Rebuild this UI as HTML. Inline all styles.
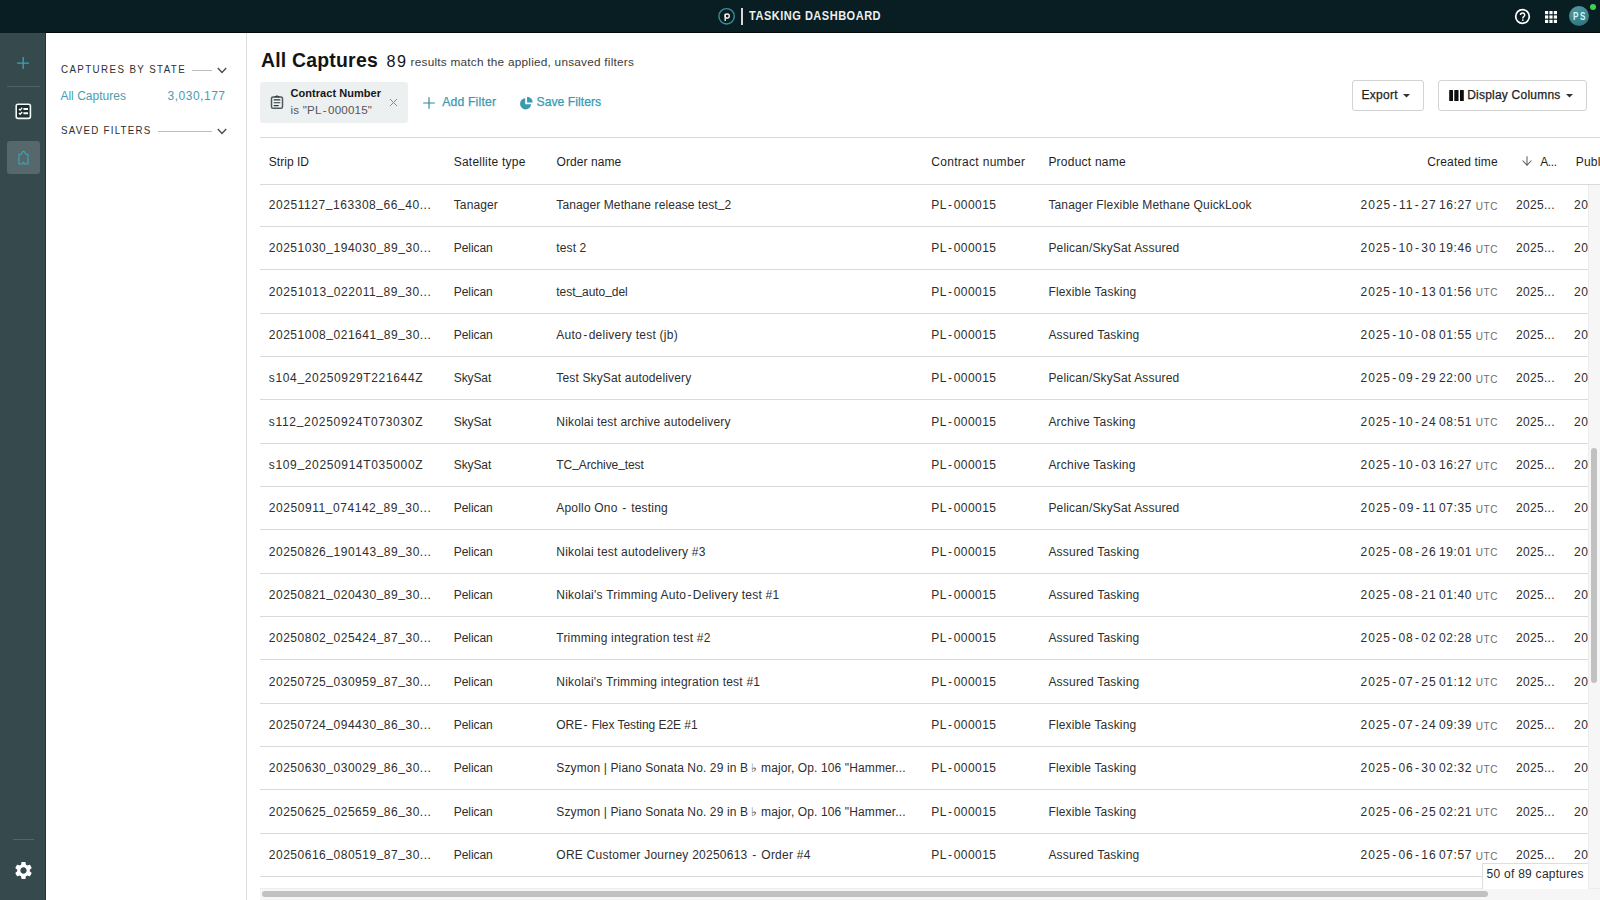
<!DOCTYPE html>
<html><head><meta charset="utf-8"><style>
*{box-sizing:border-box;margin:0;padding:0}
html,body{width:1600px;height:900px;overflow:hidden;background:#fff;font-family:"Liberation Sans",sans-serif;color:#222}
.abs{position:absolute}
.t{position:absolute;white-space:nowrap}
.med{-webkit-text-stroke:0.25px currentColor}
.u{position:relative;top:-1.6px}
.ln{position:absolute;left:260px;height:1px;background:#dadada}
#top{position:absolute;left:0;top:0;width:1600px;height:33px;background:#091e22}
#rail{position:absolute;left:0;top:33px;width:46px;height:867px;background:#364a4e;border-right:1px solid #23363a}
#panel{position:absolute;left:46px;top:33px;width:201px;height:867px;background:#fff;border-right:1px solid #dcdcdc}
</style></head><body>
<div id="top"></div>
<svg class="abs" style="left:717px;top:7px" width="20" height="20" viewBox="0 0 20 20"><circle cx="9.6" cy="9.3" r="7.7" fill="none" stroke="#3a8f9b" stroke-width="1.4"/><path d="M8.2 6.8v7.2" stroke="#f4f4f4" stroke-width="1.35"/><circle cx="10.2" cy="9.1" r="2.1" fill="none" stroke="#f4f4f4" stroke-width="1.35"/></svg>
<div class="abs" style="left:741px;top:8px;width:2px;height:16.5px;background:#d8d8d8"></div>
<svg class="abs" style="left:1514px;top:8px" width="17" height="17" viewBox="0 0 17 17"><circle cx="8.5" cy="8.5" r="6.8" fill="none" stroke="#fff" stroke-width="1.7"/><path d="M6.5 7.1c0-1.2.9-2 2.1-2s2.1.8 2.1 1.9c0 1.5-1.9 1.6-1.9 3.2v.4" fill="none" stroke="#fff" stroke-width="1.5"/><circle cx="8.8" cy="12.1" r="0.85" fill="#fff"/></svg>
<svg class="abs" style="left:1545px;top:11px" width="12" height="12" viewBox="0 0 12 12" fill="#fff"><rect x="0" y="0" width="3.2" height="3.2"/><rect x="4.4" y="0" width="3.2" height="3.2"/><rect x="8.8" y="0" width="3.2" height="3.2"/><rect x="0" y="4.4" width="3.2" height="3.2"/><rect x="4.4" y="4.4" width="3.2" height="3.2"/><rect x="8.8" y="4.4" width="3.2" height="3.2"/><rect x="0" y="8.8" width="3.2" height="3.2"/><rect x="4.4" y="8.8" width="3.2" height="3.2"/><rect x="8.8" y="8.8" width="3.2" height="3.2"/></svg>
<div class="abs" style="left:1569.1px;top:6.3px;width:20px;height:20px;border-radius:50%;background:linear-gradient(160deg,#559aa3 0%,#3d8791 50%,#2c6f79 100%)"></div>
<div class="abs" style="left:1590px;top:3.5px;width:6px;height:6px;border-radius:50%;background:#3fd24f"></div>
<div class="t" style="top:9.84px;font-size:12.0px;line-height:12.0px;color:#eeeeee;font-weight:bold;letter-spacing:0.537px;left:749.40px;transform:scaleX(0.92);transform-origin:0 0;">TASKING DASHBOARD</div>
<div class="t" style="top:11.97px;font-size:10.2px;line-height:10.2px;color:#d2f3f5;font-weight:bold;left:1572.50px;transform:scaleX(0.8);transform-origin:0 0;">P</div>
<div class="t" style="top:11.97px;font-size:10.2px;line-height:10.2px;color:#d2f3f5;font-weight:bold;left:1579.50px;transform:scaleX(0.8);transform-origin:0 0;">S</div>
<div id="rail"></div>
<svg class="abs" style="left:17px;top:57.1px" width="12.4" height="12.4" viewBox="0 0 12.4 12.4"><path d="M6.2 0.1v12.2M0.1 6.1h12.2" stroke="#3aa3b5" stroke-width="1.35"/></svg>
<div class="abs" style="left:7px;top:86px;width:33px;height:1px;background:#4f6266"></div>
<svg class="abs" style="left:15px;top:102.6px" width="17" height="17" viewBox="0 0 17 17"><rect x="1.2" y="1.2" width="14.2" height="14.2" rx="1.8" fill="#1d2c2f" stroke="#f2fafa" stroke-width="1.6"/><path d="M3.9 5.9l1.3 1.2 2-2.3M3.9 10.1l1.3 1.2 2-2.3" stroke="#f2fafa" stroke-width="1.4" fill="none"/><path d="M8.4 6h4.6M8.4 10.3h4.6" stroke="#f2fafa" stroke-width="2"/></svg>
<div class="abs" style="left:6.8px;top:141px;width:33px;height:33px;border-radius:3px;background:#56686c"></div>
<svg class="abs" style="left:17.6px;top:149.8px" width="11" height="15" viewBox="0 0 11 15"><path d="M1 14V4.2h2.3l1.2-2.3c.4-.7 1.6-.7 2 0l1.2 2.3H10V14H6.7L5.5 12.1 4.3 14z" fill="none" stroke="#3aa6b9" stroke-width="1.15" stroke-linejoin="round"/></svg>
<div class="abs" style="left:13px;top:839px;width:20.5px;height:1px;background:#52666a"></div>
<svg class="abs" style="left:12.5px;top:859.5px" width="21" height="21" viewBox="0 0 24 24"><path fill="#fff" d="M19.14 12.94c.04-.3.06-.61.06-.94 0-.32-.02-.64-.07-.94l2.03-1.58a.49.49 0 0 0 .12-.61l-1.92-3.32a.488.488 0 0 0-.59-.22l-2.39.96c-.5-.38-1.03-.7-1.62-.94l-.36-2.54a.484.484 0 0 0-.48-.41h-3.84c-.24 0-.43.17-.47.41l-.36 2.54c-.59.24-1.13.57-1.62.94l-2.39-.96c-.22-.08-.47 0-.59.22L2.74 8.87c-.12.21-.08.47.12.61l2.03 1.58c-.05.3-.09.63-.09.94s.02.64.07.94l-2.03 1.58a.49.49 0 0 0-.12.61l1.92 3.32c.12.22.37.29.59.22l2.39-.96c.5.38 1.03.7 1.62.94l.36 2.54c.05.24.24.41.48.41h3.84c.24 0 .44-.17.47-.41l.36-2.54c.59-.24 1.13-.56 1.62-.94l2.39.96c.22.08.47 0 .59-.22l1.92-3.32c.12-.22.07-.47-.12-.61l-2.01-1.58zM12 15.6c-1.98 0-3.6-1.62-3.6-3.6s1.62-3.6 3.6-3.6 3.6 1.62 3.6 3.6-1.62 3.6-3.6 3.6z"/></svg>
<div id="panel"></div>
<div class="abs" style="left:46px;top:32px;width:1554px;height:1px;background:#020a0c"></div>
<div class="t" style="top:63.70px;font-size:11.1px;line-height:11.1px;color:#2e2e2e;letter-spacing:1.583px;left:60.60px;transform:scaleX(0.88);transform-origin:0 0;">CAPTURES BY STATE</div>
<div class="t" style="top:89.84px;font-size:12.0px;line-height:12.0px;color:#4a9db0;letter-spacing:0.022px;left:60.40px;">All Captures</div>
<div class="t" style="top:89.84px;font-size:12.0px;line-height:12.0px;color:#4a9db0;letter-spacing:0.514px;left:167.50px;">3,030,177</div>
<div class="t" style="top:124.60px;font-size:11.1px;line-height:11.1px;color:#2e2e2e;letter-spacing:1.407px;left:60.60px;transform:scaleX(0.88);transform-origin:0 0;">SAVED FILTERS</div>
<div class="abs" style="left:192px;top:70px;width:20px;height:1px;background:#bdbdbd"></div>
<svg class="abs" style="left:217.4px;top:66.6px" width="10" height="7" viewBox="0 0 10 7"><path d="M0.8 1l4.2 4.4L9.2 1" fill="none" stroke="#505050" stroke-width="1.5"/></svg>
<div class="abs" style="left:157.5px;top:130.5px;width:54.5px;height:1px;background:#bdbdbd"></div>
<svg class="abs" style="left:217.4px;top:127.8px" width="10" height="7" viewBox="0 0 10 7"><path d="M0.8 1l4.2 4.4L9.2 1" fill="none" stroke="#505050" stroke-width="1.5"/></svg>
<div class="abs" style="left:260px;top:82px;width:148px;height:40.5px;border-radius:3px;background:#edf0f0"></div>
<svg class="abs" style="left:269.5px;top:94.5px" width="14" height="15" viewBox="0 0 14 15"><rect x="1.5" y="2" width="11" height="11.3" rx="1.6" fill="#eef3f3" stroke="#4f5858" stroke-width="1.5"/><path d="M4.6 2.3L7 0.9l2.4 1.4" fill="none" stroke="#2f3b3b" stroke-width="1.3"/><path d="M4.1 4.9h5.8M4.1 7.8h5.8M4.1 10.6h4.2" stroke="#24393a" stroke-width="1.1" stroke-linecap="round"/></svg>
<svg class="abs" style="left:389px;top:98px" width="9" height="9" viewBox="0 0 9 9"><path d="M1 1l7 7M8 1L1 8" stroke="#8a8a8a" stroke-width="1.0"/></svg>
<svg class="abs" style="left:423.1px;top:96.6px" width="12" height="12" viewBox="0 0 12 12"><path d="M6 0.3v11.4M0.2 6h11.6" stroke="#2f8799" stroke-width="1.15"/></svg>
<svg class="abs" style="left:518.9px;top:95.6px" width="14.5" height="14.5" viewBox="0 0 14 14"><path d="M6 2.2A5.4 5.4 0 1 0 11.8 8H6z" fill="#3a9bb0"/><path d="M7.8 0.8v5.4h5.4A5.4 5.4 0 0 0 7.8 0.8z" fill="#3a9bb0"/></svg>
<div class="abs" style="left:1352px;top:80px;width:72px;height:30.5px;border:1px solid #d3d3d3;border-radius:3px;background:#fff"></div>
<svg class="abs" style="left:1403px;top:94px" width="8" height="4" viewBox="0 0 8 4"><path d="M0 0h7L3.5 3.5z" fill="#333"/></svg>
<div class="abs" style="left:1437.5px;top:80px;width:149.5px;height:30.5px;border:1px solid #d3d3d3;border-radius:3px;background:#fff"></div>
<svg class="abs" style="left:1449px;top:90px" width="15" height="11" viewBox="0 0 15 11" fill="#0d0d0d"><rect x="0.2" y="0" width="3.8" height="11.2" rx="0.3"/><rect x="5.3" y="0" width="4.2" height="11.2" rx="0.3"/><rect x="11" y="0" width="3.8" height="11.2" rx="0.3"/></svg>
<svg class="abs" style="left:1565.5px;top:94px" width="8" height="4" viewBox="0 0 8 4"><path d="M0 0h7L3.5 3.5z" fill="#333"/></svg>
<div class="t" style="top:50.58px;font-size:19.4px;line-height:19.4px;color:#141414;font-weight:bold;letter-spacing:0.225px;left:261.00px;">All Captures</div>
<div class="t" style="top:52.79px;font-size:16.2px;line-height:16.2px;color:#141414;letter-spacing:1.480px;left:386.50px;">89</div>
<div class="t" style="top:56.51px;font-size:11.8px;line-height:11.8px;color:#3b3b3b;letter-spacing:0.233px;left:410.60px;">results match the applied, unsaved filters</div>
<div class="t" style="top:87.94px;font-size:11.0px;line-height:11.0px;color:#161616;font-weight:bold;letter-spacing:0.040px;left:290.60px;">Contract Number</div>
<div class="t" style="top:103.93px;font-size:11.6px;line-height:11.6px;color:#555555;letter-spacing:0.185px;left:290.60px;">is &quot;PL<span style="padding:0 1.2px">-</span>000015&quot;</div>
<div class="t med" style="top:95.57px;font-size:12.2px;line-height:12.2px;color:#3a9ab0;letter-spacing:0.171px;left:442.25px;">Add Filter</div>
<div class="t med" style="top:95.57px;font-size:12.2px;line-height:12.2px;color:#3a9ab0;letter-spacing:0.031px;left:536.50px;">Save Filters</div>
<div class="t med" style="top:89.14px;font-size:12.0px;line-height:12.0px;color:#1e1e1e;letter-spacing:0.303px;left:1361.50px;">Export</div>
<div class="t med" style="top:89.14px;font-size:12.0px;line-height:12.0px;color:#1e1e1e;letter-spacing:0.219px;left:1467.20px;">Display Columns</div>
<div class="abs" style="left:260px;top:137px;width:1340px;height:1px;background:#dadada"></div>
<svg class="abs" style="left:1521.6px;top:156px" width="10" height="10" viewBox="0 0 10 10"><path d="M5 0.2v9.2M0.6 4.5L5 9.3l4.4-4.8" fill="none" stroke="#5e5e5e" stroke-width="1.05"/></svg>
<div class="t" style="top:155.84px;font-size:12.0px;line-height:12.0px;color:#1f1f1f;letter-spacing:0.027px;left:268.80px;">Strip ID</div>
<div class="t" style="top:155.84px;font-size:12.0px;line-height:12.0px;color:#1f1f1f;letter-spacing:0.222px;left:453.75px;">Satellite type</div>
<div class="t" style="top:155.84px;font-size:12.0px;line-height:12.0px;color:#1f1f1f;letter-spacing:0.080px;left:556.50px;">Order name</div>
<div class="t" style="top:155.84px;font-size:12.0px;line-height:12.0px;color:#1f1f1f;letter-spacing:0.309px;left:931.20px;">Contract number</div>
<div class="t" style="top:155.84px;font-size:12.0px;line-height:12.0px;color:#1f1f1f;letter-spacing:0.226px;left:1048.40px;">Product name</div>
<div class="t" style="top:155.84px;font-size:12.0px;line-height:12.0px;color:#1f1f1f;letter-spacing:0.155px;left:1427.30px;">Created time</div>
<div class="t" style="top:155.84px;font-size:12.0px;line-height:12.0px;color:#1f1f1f;letter-spacing:-0.435px;left:1540.30px;">A...</div>
<div class="t" style="top:155.84px;font-size:12.0px;line-height:12.0px;color:#1f1f1f;letter-spacing:0.194px;left:1575.80px;">Publ</div>
<div class="abs" style="left:260px;top:183.9px;width:1340px;height:1px;background:#dadada"></div>
<div class="ln" style="top:226px;width:1327.5px"></div>
<div class="ln" style="top:269px;width:1327.5px"></div>
<div class="ln" style="top:313px;width:1327.5px"></div>
<div class="ln" style="top:356px;width:1327.5px"></div>
<div class="ln" style="top:399px;width:1327.5px"></div>
<div class="ln" style="top:443px;width:1327.5px"></div>
<div class="ln" style="top:486px;width:1327.5px"></div>
<div class="ln" style="top:529px;width:1327.5px"></div>
<div class="ln" style="top:573px;width:1327.5px"></div>
<div class="ln" style="top:616px;width:1327.5px"></div>
<div class="ln" style="top:659px;width:1327.5px"></div>
<div class="ln" style="top:703px;width:1327.5px"></div>
<div class="ln" style="top:746px;width:1327.5px"></div>
<div class="ln" style="top:789px;width:1327.5px"></div>
<div class="ln" style="top:833px;width:1327.5px"></div>
<div class="ln" style="top:876px;width:1327.5px"></div>
<div class="t" style="top:198.94px;font-size:12.0px;line-height:12.0px;color:#2e2e2e;letter-spacing:0.554px;left:268.80px;">20251127<span class="u">_</span>163308<span class="u">_</span>66<span class="u">_</span>40...</div>
<div class="t" style="top:198.94px;font-size:12.0px;line-height:12.0px;color:#2e2e2e;letter-spacing:0.106px;left:453.75px;">Tanager</div>
<div class="t" style="top:198.94px;font-size:12.0px;line-height:12.0px;color:#2e2e2e;letter-spacing:0.096px;left:556.30px;">Tanager Methane release test<span class="u">_</span>2</div>
<div class="t" style="top:198.94px;font-size:12.0px;line-height:12.0px;color:#2e2e2e;letter-spacing:0.460px;left:931.20px;">PL<span style="padding:0 1.2px">-</span>000015</div>
<div class="t" style="top:198.94px;font-size:12.0px;line-height:12.0px;color:#2e2e2e;letter-spacing:0.151px;left:1048.40px;">Tanager Flexible Methane QuickLook</div>
<div class="t" style="top:198.94px;font-size:12.0px;line-height:12.0px;color:#2e2e2e;letter-spacing:0.989px;left:1360.60px;">2025<span style="padding:0 1.4px">-</span>11<span style="padding:0 1.4px">-</span>27</div>
<div class="t" style="top:198.94px;font-size:12.0px;line-height:12.0px;color:#2e2e2e;letter-spacing:0.592px;left:1439.00px;">16:27</div>
<div class="t" style="top:201.53px;font-size:10.0px;line-height:10.0px;color:#6b6b6b;letter-spacing:0.524px;left:1475.80px;">UTC</div>
<div class="t" style="top:198.94px;font-size:12.0px;line-height:12.0px;color:#2e2e2e;letter-spacing:0.317px;left:1516.00px;">2025...</div>
<div class="t" style="top:198.94px;font-size:12.0px;line-height:12.0px;color:#2e2e2e;letter-spacing:0.652px;left:1574.00px;">20</div>
<div class="t" style="top:242.28px;font-size:12.0px;line-height:12.0px;color:#2e2e2e;letter-spacing:0.515px;left:268.80px;">20251030<span class="u">_</span>194030<span class="u">_</span>89<span class="u">_</span>30...</div>
<div class="t" style="top:242.28px;font-size:12.0px;line-height:12.0px;color:#2e2e2e;letter-spacing:-0.052px;left:453.75px;">Pelican</div>
<div class="t" style="top:242.28px;font-size:12.0px;line-height:12.0px;color:#2e2e2e;letter-spacing:0.110px;left:556.30px;">test 2</div>
<div class="t" style="top:242.28px;font-size:12.0px;line-height:12.0px;color:#2e2e2e;letter-spacing:0.460px;left:931.20px;">PL<span style="padding:0 1.2px">-</span>000015</div>
<div class="t" style="top:242.28px;font-size:12.0px;line-height:12.0px;color:#2e2e2e;letter-spacing:0.162px;left:1048.40px;">Pelican/SkySat Assured</div>
<div class="t" style="top:242.28px;font-size:12.0px;line-height:12.0px;color:#2e2e2e;letter-spacing:0.890px;left:1360.60px;">2025<span style="padding:0 1.4px">-</span>10<span style="padding:0 1.4px">-</span>30</div>
<div class="t" style="top:242.28px;font-size:12.0px;line-height:12.0px;color:#2e2e2e;letter-spacing:0.592px;left:1439.00px;">19:46</div>
<div class="t" style="top:244.87px;font-size:10.0px;line-height:10.0px;color:#6b6b6b;letter-spacing:0.524px;left:1475.80px;">UTC</div>
<div class="t" style="top:242.28px;font-size:12.0px;line-height:12.0px;color:#2e2e2e;letter-spacing:0.317px;left:1516.00px;">2025...</div>
<div class="t" style="top:242.28px;font-size:12.0px;line-height:12.0px;color:#2e2e2e;letter-spacing:0.652px;left:1574.00px;">20</div>
<div class="t" style="top:285.61px;font-size:12.0px;line-height:12.0px;color:#2e2e2e;letter-spacing:0.554px;left:268.80px;">20251013<span class="u">_</span>022011<span class="u">_</span>89<span class="u">_</span>30...</div>
<div class="t" style="top:285.61px;font-size:12.0px;line-height:12.0px;color:#2e2e2e;letter-spacing:-0.052px;left:453.75px;">Pelican</div>
<div class="t" style="top:285.61px;font-size:12.0px;line-height:12.0px;color:#2e2e2e;letter-spacing:-0.055px;left:556.30px;">test<span class="u">_</span>auto<span class="u">_</span>del</div>
<div class="t" style="top:285.61px;font-size:12.0px;line-height:12.0px;color:#2e2e2e;letter-spacing:0.460px;left:931.20px;">PL<span style="padding:0 1.2px">-</span>000015</div>
<div class="t" style="top:285.61px;font-size:12.0px;line-height:12.0px;color:#2e2e2e;letter-spacing:0.176px;left:1048.40px;">Flexible Tasking</div>
<div class="t" style="top:285.61px;font-size:12.0px;line-height:12.0px;color:#2e2e2e;letter-spacing:0.890px;left:1360.60px;">2025<span style="padding:0 1.4px">-</span>10<span style="padding:0 1.4px">-</span>13</div>
<div class="t" style="top:285.61px;font-size:12.0px;line-height:12.0px;color:#2e2e2e;letter-spacing:0.592px;left:1439.00px;">01:56</div>
<div class="t" style="top:288.20px;font-size:10.0px;line-height:10.0px;color:#6b6b6b;letter-spacing:0.524px;left:1475.80px;">UTC</div>
<div class="t" style="top:285.61px;font-size:12.0px;line-height:12.0px;color:#2e2e2e;letter-spacing:0.317px;left:1516.00px;">2025...</div>
<div class="t" style="top:285.61px;font-size:12.0px;line-height:12.0px;color:#2e2e2e;letter-spacing:0.652px;left:1574.00px;">20</div>
<div class="t" style="top:328.94px;font-size:12.0px;line-height:12.0px;color:#2e2e2e;letter-spacing:0.515px;left:268.80px;">20251008<span class="u">_</span>021641<span class="u">_</span>89<span class="u">_</span>30...</div>
<div class="t" style="top:328.94px;font-size:12.0px;line-height:12.0px;color:#2e2e2e;letter-spacing:-0.052px;left:453.75px;">Pelican</div>
<div class="t" style="top:328.94px;font-size:12.0px;line-height:12.0px;color:#2e2e2e;letter-spacing:0.256px;left:556.30px;">Auto<span style="padding:0 1.2px">-</span>delivery test (jb)</div>
<div class="t" style="top:328.94px;font-size:12.0px;line-height:12.0px;color:#2e2e2e;letter-spacing:0.460px;left:931.20px;">PL<span style="padding:0 1.2px">-</span>000015</div>
<div class="t" style="top:328.94px;font-size:12.0px;line-height:12.0px;color:#2e2e2e;letter-spacing:0.212px;left:1048.40px;">Assured Tasking</div>
<div class="t" style="top:328.94px;font-size:12.0px;line-height:12.0px;color:#2e2e2e;letter-spacing:0.890px;left:1360.60px;">2025<span style="padding:0 1.4px">-</span>10<span style="padding:0 1.4px">-</span>08</div>
<div class="t" style="top:328.94px;font-size:12.0px;line-height:12.0px;color:#2e2e2e;letter-spacing:0.592px;left:1439.00px;">01:55</div>
<div class="t" style="top:331.53px;font-size:10.0px;line-height:10.0px;color:#6b6b6b;letter-spacing:0.524px;left:1475.80px;">UTC</div>
<div class="t" style="top:328.94px;font-size:12.0px;line-height:12.0px;color:#2e2e2e;letter-spacing:0.317px;left:1516.00px;">2025...</div>
<div class="t" style="top:328.94px;font-size:12.0px;line-height:12.0px;color:#2e2e2e;letter-spacing:0.652px;left:1574.00px;">20</div>
<div class="t" style="top:372.28px;font-size:12.0px;line-height:12.0px;color:#2e2e2e;letter-spacing:0.648px;left:268.80px;">s104<span class="u">_</span>20250929T221644Z</div>
<div class="t" style="top:372.28px;font-size:12.0px;line-height:12.0px;color:#2e2e2e;letter-spacing:-0.103px;left:453.75px;">SkySat</div>
<div class="t" style="top:372.28px;font-size:12.0px;line-height:12.0px;color:#2e2e2e;letter-spacing:0.152px;left:556.30px;">Test SkySat autodelivery</div>
<div class="t" style="top:372.28px;font-size:12.0px;line-height:12.0px;color:#2e2e2e;letter-spacing:0.460px;left:931.20px;">PL<span style="padding:0 1.2px">-</span>000015</div>
<div class="t" style="top:372.28px;font-size:12.0px;line-height:12.0px;color:#2e2e2e;letter-spacing:0.162px;left:1048.40px;">Pelican/SkySat Assured</div>
<div class="t" style="top:372.28px;font-size:12.0px;line-height:12.0px;color:#2e2e2e;letter-spacing:0.890px;left:1360.60px;">2025<span style="padding:0 1.4px">-</span>09<span style="padding:0 1.4px">-</span>29</div>
<div class="t" style="top:372.28px;font-size:12.0px;line-height:12.0px;color:#2e2e2e;letter-spacing:0.592px;left:1439.00px;">22:00</div>
<div class="t" style="top:374.87px;font-size:10.0px;line-height:10.0px;color:#6b6b6b;letter-spacing:0.524px;left:1475.80px;">UTC</div>
<div class="t" style="top:372.28px;font-size:12.0px;line-height:12.0px;color:#2e2e2e;letter-spacing:0.317px;left:1516.00px;">2025...</div>
<div class="t" style="top:372.28px;font-size:12.0px;line-height:12.0px;color:#2e2e2e;letter-spacing:0.652px;left:1574.00px;">20</div>
<div class="t" style="top:415.61px;font-size:12.0px;line-height:12.0px;color:#2e2e2e;letter-spacing:0.692px;left:268.80px;">s112<span class="u">_</span>20250924T073030Z</div>
<div class="t" style="top:415.61px;font-size:12.0px;line-height:12.0px;color:#2e2e2e;letter-spacing:-0.103px;left:453.75px;">SkySat</div>
<div class="t" style="top:415.61px;font-size:12.0px;line-height:12.0px;color:#2e2e2e;letter-spacing:0.167px;left:556.30px;">Nikolai test archive autodelivery</div>
<div class="t" style="top:415.61px;font-size:12.0px;line-height:12.0px;color:#2e2e2e;letter-spacing:0.460px;left:931.20px;">PL<span style="padding:0 1.2px">-</span>000015</div>
<div class="t" style="top:415.61px;font-size:12.0px;line-height:12.0px;color:#2e2e2e;letter-spacing:0.227px;left:1048.40px;">Archive Tasking</div>
<div class="t" style="top:415.61px;font-size:12.0px;line-height:12.0px;color:#2e2e2e;letter-spacing:0.890px;left:1360.60px;">2025<span style="padding:0 1.4px">-</span>10<span style="padding:0 1.4px">-</span>24</div>
<div class="t" style="top:415.61px;font-size:12.0px;line-height:12.0px;color:#2e2e2e;letter-spacing:0.592px;left:1439.00px;">08:51</div>
<div class="t" style="top:418.20px;font-size:10.0px;line-height:10.0px;color:#6b6b6b;letter-spacing:0.524px;left:1475.80px;">UTC</div>
<div class="t" style="top:415.61px;font-size:12.0px;line-height:12.0px;color:#2e2e2e;letter-spacing:0.317px;left:1516.00px;">2025...</div>
<div class="t" style="top:415.61px;font-size:12.0px;line-height:12.0px;color:#2e2e2e;letter-spacing:0.652px;left:1574.00px;">20</div>
<div class="t" style="top:458.94px;font-size:12.0px;line-height:12.0px;color:#2e2e2e;letter-spacing:0.648px;left:268.80px;">s109<span class="u">_</span>20250914T035000Z</div>
<div class="t" style="top:458.94px;font-size:12.0px;line-height:12.0px;color:#2e2e2e;letter-spacing:-0.103px;left:453.75px;">SkySat</div>
<div class="t" style="top:458.94px;font-size:12.0px;line-height:12.0px;color:#2e2e2e;letter-spacing:-0.086px;left:556.30px;">TC<span class="u">_</span>Archive<span class="u">_</span>test</div>
<div class="t" style="top:458.94px;font-size:12.0px;line-height:12.0px;color:#2e2e2e;letter-spacing:0.460px;left:931.20px;">PL<span style="padding:0 1.2px">-</span>000015</div>
<div class="t" style="top:458.94px;font-size:12.0px;line-height:12.0px;color:#2e2e2e;letter-spacing:0.227px;left:1048.40px;">Archive Tasking</div>
<div class="t" style="top:458.94px;font-size:12.0px;line-height:12.0px;color:#2e2e2e;letter-spacing:0.890px;left:1360.60px;">2025<span style="padding:0 1.4px">-</span>10<span style="padding:0 1.4px">-</span>03</div>
<div class="t" style="top:458.94px;font-size:12.0px;line-height:12.0px;color:#2e2e2e;letter-spacing:0.592px;left:1439.00px;">16:27</div>
<div class="t" style="top:461.53px;font-size:10.0px;line-height:10.0px;color:#6b6b6b;letter-spacing:0.524px;left:1475.80px;">UTC</div>
<div class="t" style="top:458.94px;font-size:12.0px;line-height:12.0px;color:#2e2e2e;letter-spacing:0.317px;left:1516.00px;">2025...</div>
<div class="t" style="top:458.94px;font-size:12.0px;line-height:12.0px;color:#2e2e2e;letter-spacing:0.652px;left:1574.00px;">20</div>
<div class="t" style="top:502.28px;font-size:12.0px;line-height:12.0px;color:#2e2e2e;letter-spacing:0.554px;left:268.80px;">20250911<span class="u">_</span>074142<span class="u">_</span>89<span class="u">_</span>30...</div>
<div class="t" style="top:502.28px;font-size:12.0px;line-height:12.0px;color:#2e2e2e;letter-spacing:-0.052px;left:453.75px;">Pelican</div>
<div class="t" style="top:502.28px;font-size:12.0px;line-height:12.0px;color:#2e2e2e;letter-spacing:0.190px;left:556.30px;">Apollo Ono <span style="padding:0 1.2px">-</span> testing</div>
<div class="t" style="top:502.28px;font-size:12.0px;line-height:12.0px;color:#2e2e2e;letter-spacing:0.460px;left:931.20px;">PL<span style="padding:0 1.2px">-</span>000015</div>
<div class="t" style="top:502.28px;font-size:12.0px;line-height:12.0px;color:#2e2e2e;letter-spacing:0.162px;left:1048.40px;">Pelican/SkySat Assured</div>
<div class="t" style="top:502.28px;font-size:12.0px;line-height:12.0px;color:#2e2e2e;letter-spacing:0.989px;left:1360.60px;">2025<span style="padding:0 1.4px">-</span>09<span style="padding:0 1.4px">-</span>11</div>
<div class="t" style="top:502.28px;font-size:12.0px;line-height:12.0px;color:#2e2e2e;letter-spacing:0.592px;left:1439.00px;">07:35</div>
<div class="t" style="top:504.87px;font-size:10.0px;line-height:10.0px;color:#6b6b6b;letter-spacing:0.524px;left:1475.80px;">UTC</div>
<div class="t" style="top:502.28px;font-size:12.0px;line-height:12.0px;color:#2e2e2e;letter-spacing:0.317px;left:1516.00px;">2025...</div>
<div class="t" style="top:502.28px;font-size:12.0px;line-height:12.0px;color:#2e2e2e;letter-spacing:0.652px;left:1574.00px;">20</div>
<div class="t" style="top:545.61px;font-size:12.0px;line-height:12.0px;color:#2e2e2e;letter-spacing:0.515px;left:268.80px;">20250826<span class="u">_</span>190143<span class="u">_</span>89<span class="u">_</span>30...</div>
<div class="t" style="top:545.61px;font-size:12.0px;line-height:12.0px;color:#2e2e2e;letter-spacing:-0.052px;left:453.75px;">Pelican</div>
<div class="t" style="top:545.61px;font-size:12.0px;line-height:12.0px;color:#2e2e2e;letter-spacing:0.211px;left:556.30px;">Nikolai test autodelivery #3</div>
<div class="t" style="top:545.61px;font-size:12.0px;line-height:12.0px;color:#2e2e2e;letter-spacing:0.460px;left:931.20px;">PL<span style="padding:0 1.2px">-</span>000015</div>
<div class="t" style="top:545.61px;font-size:12.0px;line-height:12.0px;color:#2e2e2e;letter-spacing:0.212px;left:1048.40px;">Assured Tasking</div>
<div class="t" style="top:545.61px;font-size:12.0px;line-height:12.0px;color:#2e2e2e;letter-spacing:0.890px;left:1360.60px;">2025<span style="padding:0 1.4px">-</span>08<span style="padding:0 1.4px">-</span>26</div>
<div class="t" style="top:545.61px;font-size:12.0px;line-height:12.0px;color:#2e2e2e;letter-spacing:0.592px;left:1439.00px;">19:01</div>
<div class="t" style="top:548.20px;font-size:10.0px;line-height:10.0px;color:#6b6b6b;letter-spacing:0.524px;left:1475.80px;">UTC</div>
<div class="t" style="top:545.61px;font-size:12.0px;line-height:12.0px;color:#2e2e2e;letter-spacing:0.317px;left:1516.00px;">2025...</div>
<div class="t" style="top:545.61px;font-size:12.0px;line-height:12.0px;color:#2e2e2e;letter-spacing:0.652px;left:1574.00px;">20</div>
<div class="t" style="top:588.94px;font-size:12.0px;line-height:12.0px;color:#2e2e2e;letter-spacing:0.515px;left:268.80px;">20250821<span class="u">_</span>020430<span class="u">_</span>89<span class="u">_</span>30...</div>
<div class="t" style="top:588.94px;font-size:12.0px;line-height:12.0px;color:#2e2e2e;letter-spacing:-0.052px;left:453.75px;">Pelican</div>
<div class="t" style="top:588.94px;font-size:12.0px;line-height:12.0px;color:#2e2e2e;letter-spacing:0.243px;left:556.30px;">Nikolai&#x27;s Trimming Auto<span style="padding:0 1.2px">-</span>Delivery test #1</div>
<div class="t" style="top:588.94px;font-size:12.0px;line-height:12.0px;color:#2e2e2e;letter-spacing:0.460px;left:931.20px;">PL<span style="padding:0 1.2px">-</span>000015</div>
<div class="t" style="top:588.94px;font-size:12.0px;line-height:12.0px;color:#2e2e2e;letter-spacing:0.212px;left:1048.40px;">Assured Tasking</div>
<div class="t" style="top:588.94px;font-size:12.0px;line-height:12.0px;color:#2e2e2e;letter-spacing:0.890px;left:1360.60px;">2025<span style="padding:0 1.4px">-</span>08<span style="padding:0 1.4px">-</span>21</div>
<div class="t" style="top:588.94px;font-size:12.0px;line-height:12.0px;color:#2e2e2e;letter-spacing:0.592px;left:1439.00px;">01:40</div>
<div class="t" style="top:591.53px;font-size:10.0px;line-height:10.0px;color:#6b6b6b;letter-spacing:0.524px;left:1475.80px;">UTC</div>
<div class="t" style="top:588.94px;font-size:12.0px;line-height:12.0px;color:#2e2e2e;letter-spacing:0.317px;left:1516.00px;">2025...</div>
<div class="t" style="top:588.94px;font-size:12.0px;line-height:12.0px;color:#2e2e2e;letter-spacing:0.652px;left:1574.00px;">20</div>
<div class="t" style="top:632.27px;font-size:12.0px;line-height:12.0px;color:#2e2e2e;letter-spacing:0.515px;left:268.80px;">20250802<span class="u">_</span>025424<span class="u">_</span>87<span class="u">_</span>30...</div>
<div class="t" style="top:632.27px;font-size:12.0px;line-height:12.0px;color:#2e2e2e;letter-spacing:-0.052px;left:453.75px;">Pelican</div>
<div class="t" style="top:632.27px;font-size:12.0px;line-height:12.0px;color:#2e2e2e;letter-spacing:0.215px;left:556.30px;">Trimming integration test #2</div>
<div class="t" style="top:632.27px;font-size:12.0px;line-height:12.0px;color:#2e2e2e;letter-spacing:0.460px;left:931.20px;">PL<span style="padding:0 1.2px">-</span>000015</div>
<div class="t" style="top:632.27px;font-size:12.0px;line-height:12.0px;color:#2e2e2e;letter-spacing:0.212px;left:1048.40px;">Assured Tasking</div>
<div class="t" style="top:632.27px;font-size:12.0px;line-height:12.0px;color:#2e2e2e;letter-spacing:0.890px;left:1360.60px;">2025<span style="padding:0 1.4px">-</span>08<span style="padding:0 1.4px">-</span>02</div>
<div class="t" style="top:632.27px;font-size:12.0px;line-height:12.0px;color:#2e2e2e;letter-spacing:0.592px;left:1439.00px;">02:28</div>
<div class="t" style="top:634.87px;font-size:10.0px;line-height:10.0px;color:#6b6b6b;letter-spacing:0.524px;left:1475.80px;">UTC</div>
<div class="t" style="top:632.27px;font-size:12.0px;line-height:12.0px;color:#2e2e2e;letter-spacing:0.317px;left:1516.00px;">2025...</div>
<div class="t" style="top:632.27px;font-size:12.0px;line-height:12.0px;color:#2e2e2e;letter-spacing:0.652px;left:1574.00px;">20</div>
<div class="t" style="top:675.61px;font-size:12.0px;line-height:12.0px;color:#2e2e2e;letter-spacing:0.515px;left:268.80px;">20250725<span class="u">_</span>030959<span class="u">_</span>87<span class="u">_</span>30...</div>
<div class="t" style="top:675.61px;font-size:12.0px;line-height:12.0px;color:#2e2e2e;letter-spacing:-0.052px;left:453.75px;">Pelican</div>
<div class="t" style="top:675.61px;font-size:12.0px;line-height:12.0px;color:#2e2e2e;letter-spacing:0.216px;left:556.30px;">Nikolai&#x27;s Trimming integration test #1</div>
<div class="t" style="top:675.61px;font-size:12.0px;line-height:12.0px;color:#2e2e2e;letter-spacing:0.460px;left:931.20px;">PL<span style="padding:0 1.2px">-</span>000015</div>
<div class="t" style="top:675.61px;font-size:12.0px;line-height:12.0px;color:#2e2e2e;letter-spacing:0.212px;left:1048.40px;">Assured Tasking</div>
<div class="t" style="top:675.61px;font-size:12.0px;line-height:12.0px;color:#2e2e2e;letter-spacing:0.890px;left:1360.60px;">2025<span style="padding:0 1.4px">-</span>07<span style="padding:0 1.4px">-</span>25</div>
<div class="t" style="top:675.61px;font-size:12.0px;line-height:12.0px;color:#2e2e2e;letter-spacing:0.592px;left:1439.00px;">01:12</div>
<div class="t" style="top:678.20px;font-size:10.0px;line-height:10.0px;color:#6b6b6b;letter-spacing:0.524px;left:1475.80px;">UTC</div>
<div class="t" style="top:675.61px;font-size:12.0px;line-height:12.0px;color:#2e2e2e;letter-spacing:0.317px;left:1516.00px;">2025...</div>
<div class="t" style="top:675.61px;font-size:12.0px;line-height:12.0px;color:#2e2e2e;letter-spacing:0.652px;left:1574.00px;">20</div>
<div class="t" style="top:718.94px;font-size:12.0px;line-height:12.0px;color:#2e2e2e;letter-spacing:0.515px;left:268.80px;">20250724<span class="u">_</span>094430<span class="u">_</span>86<span class="u">_</span>30...</div>
<div class="t" style="top:718.94px;font-size:12.0px;line-height:12.0px;color:#2e2e2e;letter-spacing:-0.052px;left:453.75px;">Pelican</div>
<div class="t" style="top:718.94px;font-size:12.0px;line-height:12.0px;color:#2e2e2e;letter-spacing:-0.037px;left:556.30px;">ORE<span style="padding:0 1.2px">-</span> Flex Testing E2E #1</div>
<div class="t" style="top:718.94px;font-size:12.0px;line-height:12.0px;color:#2e2e2e;letter-spacing:0.460px;left:931.20px;">PL<span style="padding:0 1.2px">-</span>000015</div>
<div class="t" style="top:718.94px;font-size:12.0px;line-height:12.0px;color:#2e2e2e;letter-spacing:0.176px;left:1048.40px;">Flexible Tasking</div>
<div class="t" style="top:718.94px;font-size:12.0px;line-height:12.0px;color:#2e2e2e;letter-spacing:0.890px;left:1360.60px;">2025<span style="padding:0 1.4px">-</span>07<span style="padding:0 1.4px">-</span>24</div>
<div class="t" style="top:718.94px;font-size:12.0px;line-height:12.0px;color:#2e2e2e;letter-spacing:0.592px;left:1439.00px;">09:39</div>
<div class="t" style="top:721.53px;font-size:10.0px;line-height:10.0px;color:#6b6b6b;letter-spacing:0.524px;left:1475.80px;">UTC</div>
<div class="t" style="top:718.94px;font-size:12.0px;line-height:12.0px;color:#2e2e2e;letter-spacing:0.317px;left:1516.00px;">2025...</div>
<div class="t" style="top:718.94px;font-size:12.0px;line-height:12.0px;color:#2e2e2e;letter-spacing:0.652px;left:1574.00px;">20</div>
<div class="t" style="top:762.27px;font-size:12.0px;line-height:12.0px;color:#2e2e2e;letter-spacing:0.515px;left:268.80px;">20250630<span class="u">_</span>030029<span class="u">_</span>86<span class="u">_</span>30...</div>
<div class="t" style="top:762.27px;font-size:12.0px;line-height:12.0px;color:#2e2e2e;letter-spacing:-0.052px;left:453.75px;">Pelican</div>
<div class="t" style="top:762.27px;font-size:12.0px;line-height:12.0px;color:#2e2e2e;letter-spacing:0.116px;left:556.30px;">Szymon | Piano Sonata No. 29 in B ♭ major, Op. 106 &quot;Hammer...</div>
<div class="t" style="top:762.27px;font-size:12.0px;line-height:12.0px;color:#2e2e2e;letter-spacing:0.460px;left:931.20px;">PL<span style="padding:0 1.2px">-</span>000015</div>
<div class="t" style="top:762.27px;font-size:12.0px;line-height:12.0px;color:#2e2e2e;letter-spacing:0.176px;left:1048.40px;">Flexible Tasking</div>
<div class="t" style="top:762.27px;font-size:12.0px;line-height:12.0px;color:#2e2e2e;letter-spacing:0.890px;left:1360.60px;">2025<span style="padding:0 1.4px">-</span>06<span style="padding:0 1.4px">-</span>30</div>
<div class="t" style="top:762.27px;font-size:12.0px;line-height:12.0px;color:#2e2e2e;letter-spacing:0.592px;left:1439.00px;">02:32</div>
<div class="t" style="top:764.87px;font-size:10.0px;line-height:10.0px;color:#6b6b6b;letter-spacing:0.524px;left:1475.80px;">UTC</div>
<div class="t" style="top:762.27px;font-size:12.0px;line-height:12.0px;color:#2e2e2e;letter-spacing:0.317px;left:1516.00px;">2025...</div>
<div class="t" style="top:762.27px;font-size:12.0px;line-height:12.0px;color:#2e2e2e;letter-spacing:0.652px;left:1574.00px;">20</div>
<div class="t" style="top:805.61px;font-size:12.0px;line-height:12.0px;color:#2e2e2e;letter-spacing:0.515px;left:268.80px;">20250625<span class="u">_</span>025659<span class="u">_</span>86<span class="u">_</span>30...</div>
<div class="t" style="top:805.61px;font-size:12.0px;line-height:12.0px;color:#2e2e2e;letter-spacing:-0.052px;left:453.75px;">Pelican</div>
<div class="t" style="top:805.61px;font-size:12.0px;line-height:12.0px;color:#2e2e2e;letter-spacing:0.116px;left:556.30px;">Szymon | Piano Sonata No. 29 in B ♭ major, Op. 106 &quot;Hammer...</div>
<div class="t" style="top:805.61px;font-size:12.0px;line-height:12.0px;color:#2e2e2e;letter-spacing:0.460px;left:931.20px;">PL<span style="padding:0 1.2px">-</span>000015</div>
<div class="t" style="top:805.61px;font-size:12.0px;line-height:12.0px;color:#2e2e2e;letter-spacing:0.176px;left:1048.40px;">Flexible Tasking</div>
<div class="t" style="top:805.61px;font-size:12.0px;line-height:12.0px;color:#2e2e2e;letter-spacing:0.890px;left:1360.60px;">2025<span style="padding:0 1.4px">-</span>06<span style="padding:0 1.4px">-</span>25</div>
<div class="t" style="top:805.61px;font-size:12.0px;line-height:12.0px;color:#2e2e2e;letter-spacing:0.592px;left:1439.00px;">02:21</div>
<div class="t" style="top:808.20px;font-size:10.0px;line-height:10.0px;color:#6b6b6b;letter-spacing:0.524px;left:1475.80px;">UTC</div>
<div class="t" style="top:805.61px;font-size:12.0px;line-height:12.0px;color:#2e2e2e;letter-spacing:0.317px;left:1516.00px;">2025...</div>
<div class="t" style="top:805.61px;font-size:12.0px;line-height:12.0px;color:#2e2e2e;letter-spacing:0.652px;left:1574.00px;">20</div>
<div class="t" style="top:848.94px;font-size:12.0px;line-height:12.0px;color:#2e2e2e;letter-spacing:0.515px;left:268.80px;">20250616<span class="u">_</span>080519<span class="u">_</span>87<span class="u">_</span>30...</div>
<div class="t" style="top:848.94px;font-size:12.0px;line-height:12.0px;color:#2e2e2e;letter-spacing:-0.052px;left:453.75px;">Pelican</div>
<div class="t" style="top:848.94px;font-size:12.0px;line-height:12.0px;color:#2e2e2e;letter-spacing:0.245px;left:556.30px;">ORE Customer Journey 20250613 <span style="padding:0 1.2px">-</span> Order #4</div>
<div class="t" style="top:848.94px;font-size:12.0px;line-height:12.0px;color:#2e2e2e;letter-spacing:0.460px;left:931.20px;">PL<span style="padding:0 1.2px">-</span>000015</div>
<div class="t" style="top:848.94px;font-size:12.0px;line-height:12.0px;color:#2e2e2e;letter-spacing:0.212px;left:1048.40px;">Assured Tasking</div>
<div class="t" style="top:848.94px;font-size:12.0px;line-height:12.0px;color:#2e2e2e;letter-spacing:0.890px;left:1360.60px;">2025<span style="padding:0 1.4px">-</span>06<span style="padding:0 1.4px">-</span>16</div>
<div class="t" style="top:848.94px;font-size:12.0px;line-height:12.0px;color:#2e2e2e;letter-spacing:0.592px;left:1439.00px;">07:57</div>
<div class="t" style="top:851.53px;font-size:10.0px;line-height:10.0px;color:#6b6b6b;letter-spacing:0.524px;left:1475.80px;">UTC</div>
<div class="t" style="top:848.94px;font-size:12.0px;line-height:12.0px;color:#2e2e2e;letter-spacing:0.317px;left:1516.00px;">2025...</div>
<div class="t" style="top:848.94px;font-size:12.0px;line-height:12.0px;color:#2e2e2e;letter-spacing:0.652px;left:1574.00px;">20</div>
<div class="abs" style="left:1587.5px;top:185px;width:12.5px;height:703px;background:#f6f6f6;border-left:1px solid #ececec"></div>
<div class="abs" style="left:1591px;top:448px;width:6px;height:235px;border-radius:3px;background:#c1c1c1"></div>
<div class="abs" style="left:260px;top:888px;width:1340px;height:12px;background:#f6f6f6;border-top:1px solid #ececec"></div>
<div class="abs" style="left:262px;top:891px;width:1226px;height:6px;border-radius:3px;background:#c1c1c1"></div>
<div class="abs" style="left:1482px;top:862.5px;width:105.5px;height:26px;background:#fff;border:1px solid #dedede;border-bottom:none;border-right:none"></div>
<div class="t" style="top:867.84px;font-size:12.0px;line-height:12.0px;color:#2a2a2a;letter-spacing:0.267px;left:1486.50px;">50 of 89 captures</div>
</body></html>
